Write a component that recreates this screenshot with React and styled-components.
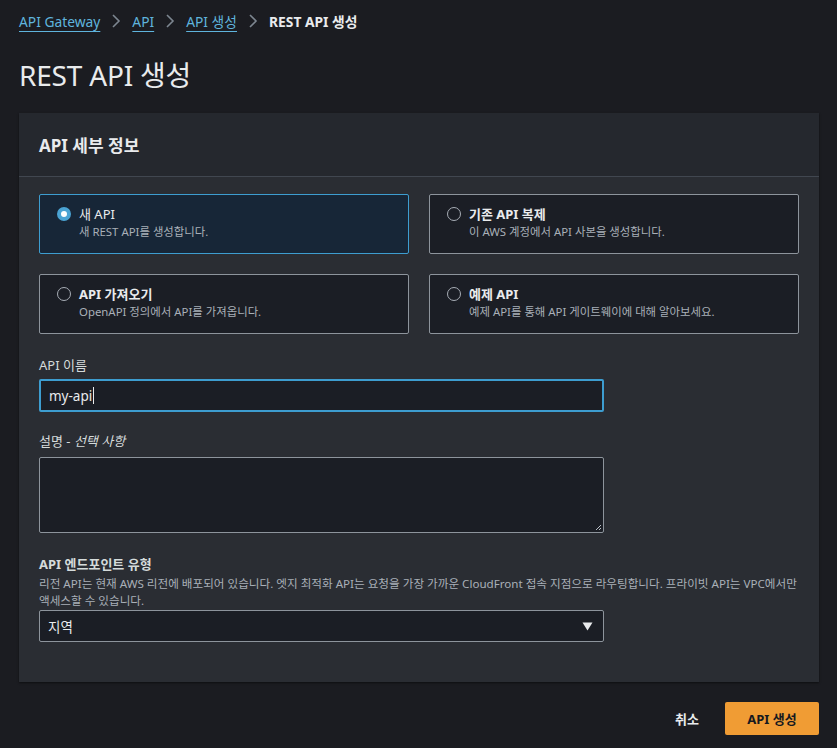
import React from "react";
import styled, { createGlobalStyle } from "styled-components";

const Global = createGlobalStyle`
  html, body { margin: 0; padding: 0; background: #1b1c21; }
  body { font-family: "Noto Sans", "Noto Sans CJK KR", sans-serif; color: #d5dbdb; }
  * { box-sizing: border-box; }
`;

const Page = styled.div`
  padding: 10px 18px 0 19px;
  min-height: 748px;
`;

const Crumbs = styled.nav`
  display: flex;
  align-items: center;
  gap: 9px;
  height: 22px;
  font-size: 13.8px;
`;

const Crumb = styled.a`
  color: ${(p) => (p.$current ? "#e9ebed" : "#5fb4dd")};
  font-weight: ${(p) => (p.$current ? 700 : 400)};
  text-decoration: ${(p) => (p.$current ? "none" : "underline")};
  text-underline-offset: 4px;
  text-decoration-thickness: 1px;
`;

const Chevron = styled.svg`
  width: 10px;
  height: 14px;
  margin: 0 2px;
`;

const Title = styled.h1`
  margin: 25px 0 0;
  font-size: 28px;
  font-weight: 400;
  color: #e9ebed;
  line-height: 36px;
  letter-spacing: -0.2px;
`;

const Panel = styled.section`
  margin-top: 20px;
  background: #2a2d33;
  box-shadow: 0 1px 2px rgba(0, 0, 0, 0.5);
`;

const PanelHeader = styled.header`
  height: 64px;
  padding: 0 20px;
  display: flex;
  align-items: center;
  background: #25282e;
  border-bottom: 1px solid #414750;
  font-size: 17px;
  font-weight: 700;
  color: #e9ebed;
`;

const PanelBody = styled.div`
  padding: 17px 20px 40px;
`;

const CardGrid = styled.div`
  display: grid;
  grid-template-columns: 1fr 1fr;
  column-gap: 20px;
  row-gap: 20px;
`;

const Card = styled.label`
  height: 60px;
  display: flex;
  gap: 8px;
  padding: 10px 16px 0 17px;
  background: ${(p) => (p.$selected ? "#172637" : "#1b1e25")};
  border: 1px solid ${(p) => (p.$selected ? "#3d9dd0" : "#8d949c")};
  border-radius: 2px;
`;

const Radio = styled.span`
  flex: none;
  width: 14px;
  height: 14px;
  margin-top: 2px;
  border-radius: 50%;
  ${(p) =>
    p.$on
      ? `background: #fff; border: 4px solid #4aa3d3;`
      : `border: 1.5px solid #a7adb5; background: transparent;`}
`;

const CardText = styled.div`
  display: flex;
  flex-direction: column;
`;

const CardTitle = styled.span`
  font-size: 13px;
  line-height: 18px;
  font-weight: ${(p) => (p.$bold ? 700 : 400)};
  color: #e9ebed;
`;

const CardDesc = styled.span`
  font-size: 11.4px;
  line-height: 18px;
  color: #a9b0b8;
`;

const Field = styled.div`
  margin-top: ${(p) => p.$top || 22}px;
  width: 565px;
`;

const Label = styled.div`
  font-size: 13px;
  line-height: 18px;
  color: #d5dbdb;
  font-weight: ${(p) => (p.$bold ? 700 : 400)};
  margin-bottom: ${(p) => p.$mb ?? 7}px;
  em { font-style: italic; }
`;

const Hint = styled.div`
  font-size: 11.6px;
  line-height: 17px;
  color: #a9b0b8;
  width: 762px;
  margin: 2px 0 1px;
  word-break: keep-all;
`;

const Input = styled.div`
  height: 33px;
  display: flex;
  align-items: center;
  padding: 0 8px;
  background: #1b1e25;
  border: 2px solid #3d9dd0;
  border-radius: 2px;
  font-size: 13.5px;
  color: #e9ebed;
`;

const Caret = styled.span`
  display: inline-block;
  width: 1px;
  height: 17px;
  background: #e9ebed;
  margin-left: 1px;
`;

const TextArea = styled.div`
  position: relative;
  height: 76px;
  background: #1b1e25;
  border: 1px solid #8d949c;
  border-radius: 2px;
`;

const Grip = styled.svg`
  position: absolute;
  right: 1px;
  bottom: 1px;
  width: 8px;
  height: 8px;
`;

const Select = styled.div`
  height: 32px;
  display: flex;
  align-items: center;
  justify-content: space-between;
  padding: 0 10px 0 8px;
  background: #1b1e25;
  border: 1px solid #8d949c;
  border-radius: 2px;
  font-size: 13.5px;
  color: #e9ebed;
`;

const Arrow = styled.svg`
  width: 11px;
  height: 9px;
`;

const Footer = styled.div`
  display: flex;
  justify-content: flex-end;
  align-items: center;
  gap: 26px;
  margin-top: 20px;
`;

const LinkButton = styled.button`
  background: none;
  border: none;
  padding: 0;
  font-family: inherit;
  font-size: 13px;
  font-weight: 700;
  color: #e9ebed;
`;

const PrimaryButton = styled.button`
  height: 33px;
  width: 94px;
  background: #f09c34;
  border: none;
  border-radius: 2px;
  font-family: inherit;
  font-size: 13px;
  font-weight: 700;
  color: #16191f;
`;

const ChevronIcon = () => (
  <Chevron viewBox="0 0 10 14">
    <path d="M2 1l6 6-6 6" fill="none" stroke="#7d8690" strokeWidth="1.6" />
  </Chevron>
);

const options = [
  { title: "새 API", desc: "새 REST API를 생성합니다.", selected: true },
  { title: "기존 API 복제", desc: "이 AWS 계정에서 API 사본을 생성합니다." },
  { title: "API 가져오기", desc: "OpenAPI 정의에서 API를 가져옵니다." },
  { title: "예제 API", desc: "예제 API를 통해 API 게이트웨이에 대해 알아보세요." },
];

export default function App() {
  return (
    <Page>
      <Global />
      <Crumbs>
        <Crumb>API Gateway</Crumb>
        <ChevronIcon />
        <Crumb>API</Crumb>
        <ChevronIcon />
        <Crumb>API 생성</Crumb>
        <ChevronIcon />
        <Crumb $current>REST API 생성</Crumb>
      </Crumbs>
      <Title>REST API 생성</Title>
      <Panel>
        <PanelHeader>API 세부 정보</PanelHeader>
        <PanelBody>
          <CardGrid>
            {options.map((o) => (
              <Card key={o.title} $selected={o.selected}>
                <Radio $on={o.selected} />
                <CardText>
                  <CardTitle $bold={!o.selected}>{o.title}</CardTitle>
                  <CardDesc>{o.desc}</CardDesc>
                </CardText>
              </Card>
            ))}
          </CardGrid>
          <Field $top={22}>
            <Label $mb={5}>API 이름</Label>
            <Input>
              my-api
              <Caret />
            </Input>
          </Field>
          <Field $top={20}>
            <Label>
              설명 - <em>선택 사항</em>
            </Label>
            <TextArea>
              <Grip viewBox="0 0 8 8">
                <path d="M7 2L2 7M7 5L5 7" stroke="#b8bec5" strokeWidth="1" />
              </Grip>
            </TextArea>
          </Field>
          <Field $top={22}>
            <Label $bold $mb={0}>API 엔드포인트 유형</Label>
            <Hint>
              리전 API는 현재 AWS 리전에 배포되어 있습니다. 엣지 최적화 API는 요청을 가장 가까운 CloudFront 접속 지점으로 라우팅합니다. 프라이빗 API는 VPC에서만 액세스할 수 있습니다.
            </Hint>
            <Select>
              지역
              <Arrow viewBox="0 0 11 9">
                <path d="M0.5 0.5h10L5.5 8.5z" fill="#e9ebed" />
              </Arrow>
            </Select>
          </Field>
        </PanelBody>
      </Panel>
      <Footer>
        <LinkButton>취소</LinkButton>
        <PrimaryButton>API 생성</PrimaryButton>
      </Footer>
    </Page>
  );
}
